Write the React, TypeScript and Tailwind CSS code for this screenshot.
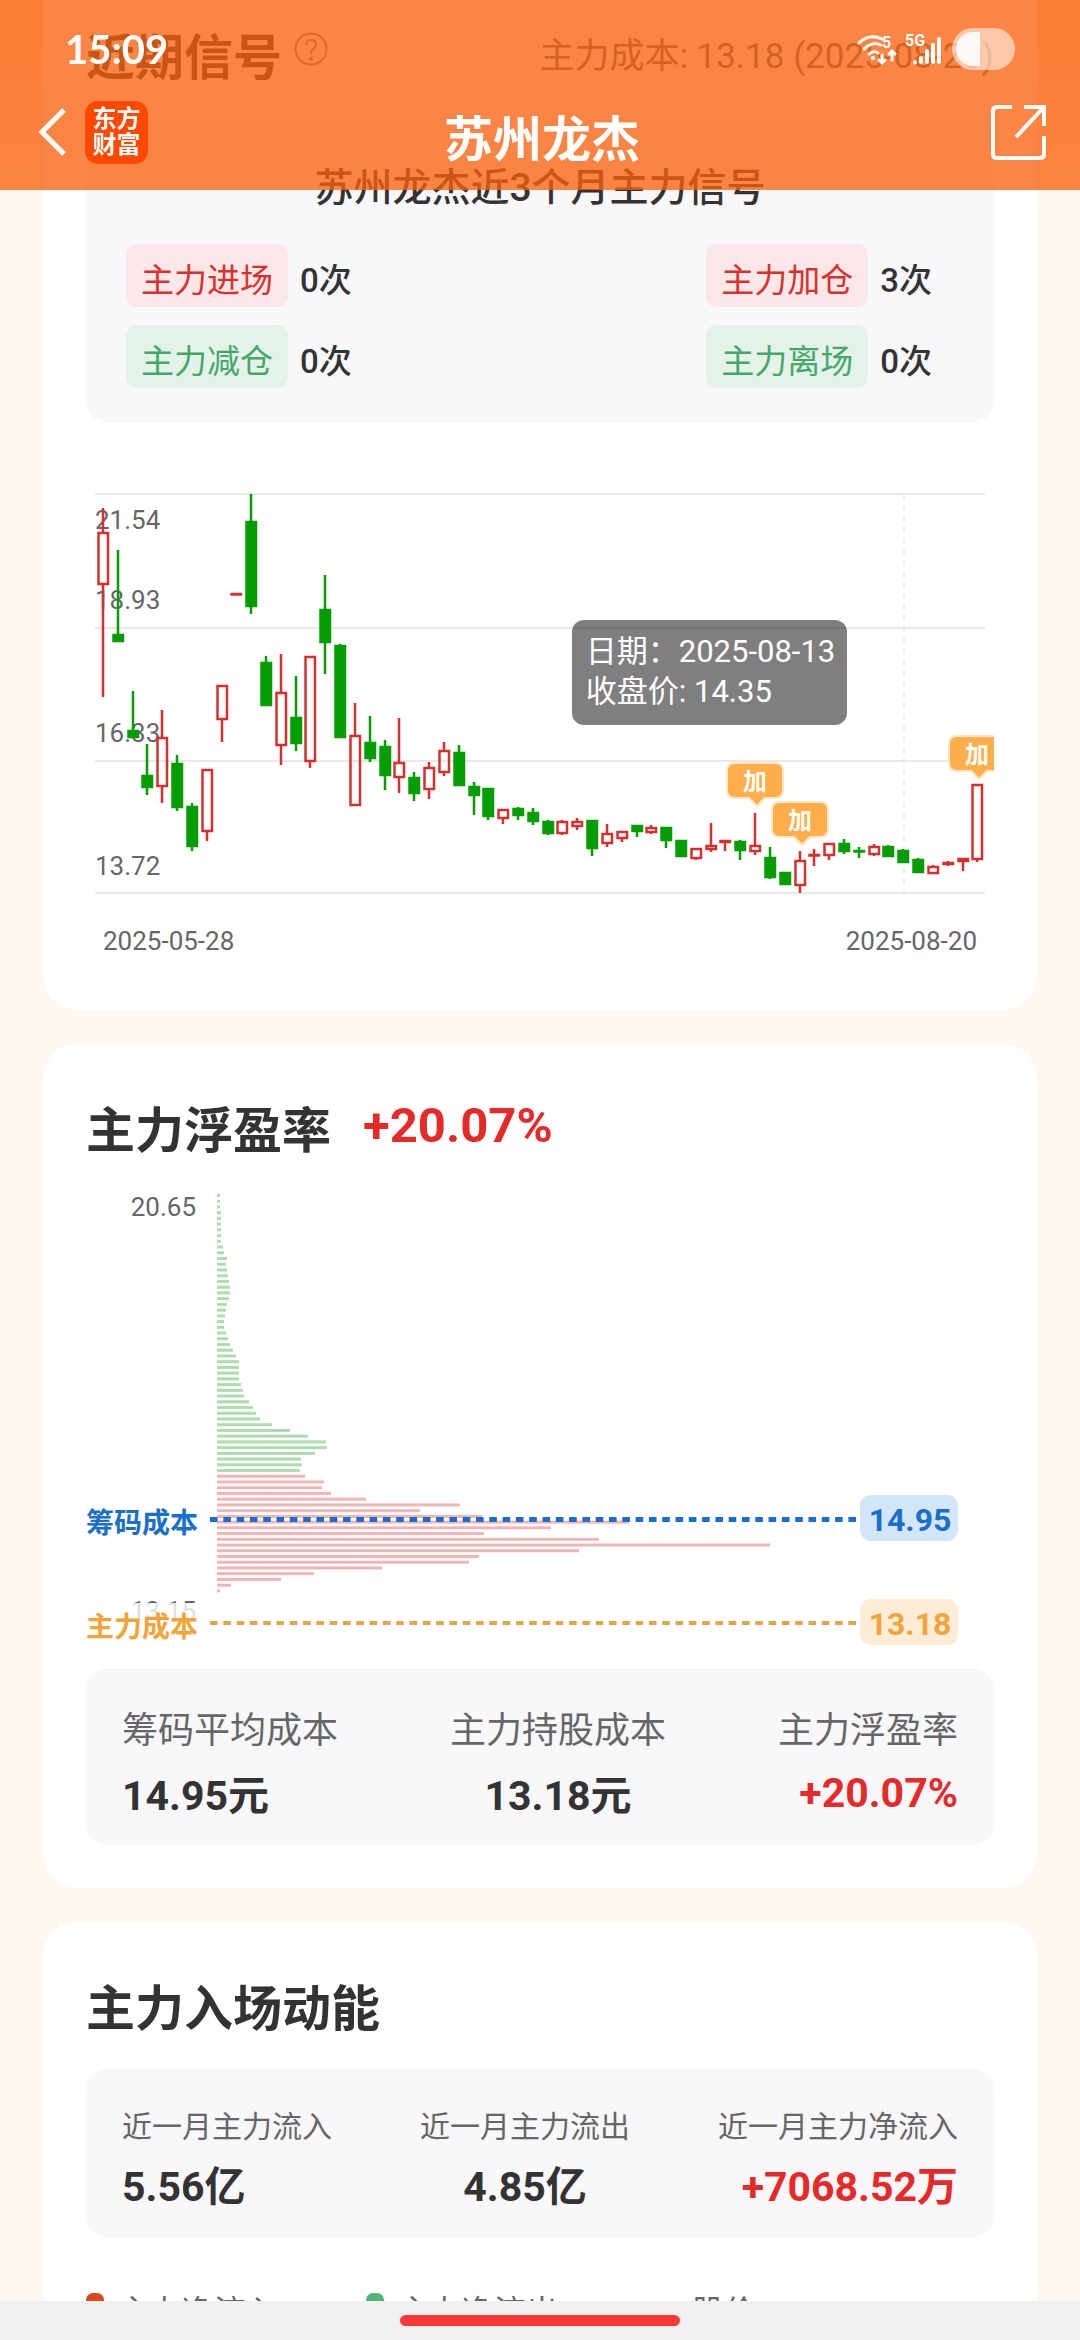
import type { ReactNode } from "react";

type Candle = { up: boolean; high: number; top: number; bottom: number; low: number };

const CANDLE_START = 17;
const CANDLE_STEP = 14.82;

// u = close above open, d = close below open: [kind, high, top, bottom, low]
const RAW_CANDLES: [string, number, number, number, number][] = [
    ["u", 28, 52, 105, 217], ["d", 70, 154, 162, 162], ["d", 211, 250, 258, 258], ["d", 264, 295, 308, 315],
    ["u", 230, 257, 307, 323], ["d", 275, 283, 328, 331], ["d", 323, 326, 367, 371], ["u", 289, 289, 352, 361],
    ["u", 205, 205, 240, 262], ["u", 113, 113, 115, 115], ["d", 14, 41, 127, 134], ["d", 176, 182, 226, 226],
    ["u", 174, 212, 266, 285], ["d", 196, 237, 264, 271], ["u", 176, 176, 282, 288], ["d", 95, 129, 163, 194],
    ["d", 164, 165, 258, 258], ["u", 223, 255, 326, 326], ["d", 236, 262, 279, 282], ["d", 260, 266, 296, 310],
    ["u", 238, 282, 298, 313], ["d", 292, 297, 314, 321], ["u", 282, 287, 310, 319], ["u", 262, 270, 293, 296],
    ["d", 265, 272, 306, 306], ["d", 302, 306, 316, 335], ["d", 308, 308, 337, 340], ["u", 329, 329, 339, 344],
    ["d", 327, 328, 336, 340], ["d", 328, 332, 342, 345], ["d", 340, 341, 354, 355], ["u", 340, 341, 354, 355],
    ["u", 338, 341, 347, 350], ["d", 340, 340, 369, 376], ["u", 344, 353, 364, 367], ["u", 351, 351, 359, 362],
    ["d", 345, 345, 352, 357], ["u", 345, 347, 353, 354], ["d", 347, 347, 361, 368], ["d", 360, 360, 377, 377],
    ["u", 368, 368, 379, 380], ["u", 343, 365, 370, 372], ["u", 360, 360, 363, 371], ["d", 360, 361, 371, 380],
    ["u", 333, 365, 372, 375], ["d", 367, 377, 398, 399], ["d", 392, 392, 405, 405], ["u", 371, 380, 406, 413],
    ["u", 369, 374, 376, 386], ["u", 363, 363, 376, 380], ["d", 359, 363, 372, 374], ["d", 367, 370, 372, 378],
    ["u", 364, 366, 375, 376], ["d", 365, 366, 377, 377], ["d", 369, 370, 383, 383], ["d", 378, 379, 393, 393],
    ["u", 385, 386, 394, 394], ["u", 381, 382, 385, 386], ["u", 378, 378, 382, 391], ["u", 304, 304, 380, 382],
];

const CANDLES: Candle[] = RAW_CANDLES.map(([kind, high, top, bottom, low]) => ({
    up: kind === "u", high, top, bottom, low,
}));

const PROFIT_BARS = [
    3, 3, 3, 4, 4, 4, 4, 4, 4, 6, 7, 10, 9, 10, 11, 12, 13, 13, 12, 10, 9, 8, 7, 7, 9, 11, 13, 16, 19, 22,
    22, 22, 22, 24, 26, 27, 32, 36, 39, 43, 55, 73, 91, 109, 110, 98, 84, 85, 83,
];

const LOSS_BARS = [
    88, 107, 105, 114, 149, 243, 203, 265, 412, 334, 267, 382, 553, 362, 262, 252, 165, 97, 64, 14, 3,
];

const SIGNALS = [
    { name: "主力进场", count: 0, buy: true },
    { name: "主力加仓", count: 3, buy: true },
    { name: "主力减仓", count: 0, buy: false },
    { name: "主力离场", count: 0, buy: false },
];

function Card({ children, className = "" }: { children: ReactNode; className?: string }) {
    return <section className={`bg-white px-[43px] ${className}`}>{children}</section>;
}

function StatusIcons() {
    return (
        <svg width="164" height="50" viewBox="0 0 164 50" fill="none" stroke="white" strokeLinecap="round">
            {/* wifi */}
            <path d="M3 19 Q13 9 26 15" strokeWidth="3" />
            <path d="M8 25 Q16 17 25 21" strokeWidth="3" />
            <path d="M13 30 Q18 26 22 29" strokeWidth="3" />
            <circle cx="17" cy="34" r="2" fill="white" stroke="none" />
            <text x="26" y="24" fontSize="16" fontWeight="700" fill="white" stroke="none">5</text>
            <path d="M26 31 V38 M23 36 L26 39 L29 36" strokeWidth="3" />
            <path d="M36 36 V28 M33 30 L36 27 L39 30" strokeWidth="3" />
            {/* mobile signal */}
            <text x="49" y="22" fontSize="16" fontWeight="700" fill="white" stroke="none">5G</text>
            <path d="M59 38 V38.5 M65 34 V38 M71 27 V38 M77 21 V38 M83 15 V38" strokeWidth="4" />
            {/* battery */}
            <rect x="96" y="4" width="63" height="42" rx="21" fill="white" fillOpacity="0.55" stroke="none" />
            <path d="M124 8 V42 H117 A17 17 0 0 1 117 8 Z" fill="white" fillOpacity="0.9" stroke="none" />
        </svg>
    );
}

function Header() {
    return (
        <header className="fixed inset-x-0 top-0 z-20 flex h-[190px] flex-col bg-[#fa600c]/77 text-white">
            <div className="flex h-[98px] items-center justify-between pl-[65px] pr-[60px]">
                <time className="font-['Lato'] text-[40px] font-bold">15:09</time>
                <StatusIcons />
            </div>
            <div className="grid h-[68px] grid-cols-[1fr_auto_1fr] items-center pl-9 pr-8">
                <div className="flex items-center gap-4">
                    <button type="button" aria-label="返回">
                        <svg width="33" height="50" viewBox="0 0 33 50" fill="none" stroke="white" strokeWidth="5">
                            <path d="M28 3 L6 25 L28 47" />
                        </svg>
                    </button>
                    <a href="#" className="grid h-[63px] w-[63px] place-content-center rounded-[13px] bg-[#ff4800] text-center text-2xl leading-[26px] font-bold">
                        东方<br />财富
                    </a>
                </div>
                <h1 className="pt-4 text-[49px] leading-none font-bold">苏州龙杰</h1>
                <button type="button" aria-label="分享" className="justify-self-end">
                    <svg width="60" height="60" viewBox="0 0 60 60" fill="none" stroke="white" strokeWidth="4">
                        <path d="M24 5 H9 Q5 5 5 9 V52 Q5 56 9 56 H52 Q56 56 56 52 V34" />
                        <path d="M36 5 H56 V24" />
                        <path d="M28 35 L56 5" />
                    </svg>
                </button>
            </div>
        </header>
    );
}

function AddTag({ x, y }: { x: number; y: number }) {
    return (
        <g>
            <path
                d={`M${x - 20} ${y} H${x + 20} Q${x + 28} ${y} ${x + 28} ${y + 8} V${y + 27} Q${x + 28} ${y + 35} ${x + 20} ${y + 35} H${x + 10} L${x + 2} ${y + 43} L${x - 6} ${y + 35} H${x - 20} Q${x - 28} ${y + 35} ${x - 28} ${y + 27} V${y + 8} Q${x - 28} ${y} ${x - 20} ${y} Z`}
                fill="#ffae4b"
                stroke="#ffe6c4"
                strokeWidth="2"
            />
            <text x={x} y={y + 27} fontSize="24" fontWeight="700" fill="white" textAnchor="middle">加</text>
        </g>
    );
}

function CandleChart() {
    return (
        <div className="relative">
            <svg viewBox="0 0 908 480" className="w-full">
                {[14, 148, 281, 413].map((y) => (
                    <rect key={y} x="9" y={y - 1} width="890" height="2" fill="#e8e8e8" />
                ))}
                <path d="M818 14 V413" stroke="#dddddd" strokeWidth="1" strokeDasharray="6 5" />
                <g fontSize="26" fill="#666666">
                    <text x="9" y="49">21.54</text>
                    <text x="9" y="129">18.93</text>
                    <text x="9" y="262">16.33</text>
                    <text x="9" y="395">13.72</text>
                    <text x="17" y="470">2025-05-28</text>
                    <text x="891" y="470" textAnchor="end">2025-08-20</text>
                </g>
                {CANDLES.map((c, i) => {
                    const x = Math.round(CANDLE_START + i * CANDLE_STEP);
                    const color = c.up ? "#d43030" : "#049e04";
                    return (
                        <g key={i} stroke={color} strokeWidth="2.5">
                            <path d={`M${x} ${c.high} V${c.top} M${x} ${c.bottom} V${c.low}`} />
                            <rect
                                x={x - 4.5}
                                y={c.top + 1}
                                width="9.5"
                                height={Math.max(c.bottom - c.top - 2, 0.5)}
                                fill={c.up ? "none" : color}
                            />
                        </g>
                    );
                })}
                <AddTag x={669} y={283} />
                <AddTag x={714} y={322} />
                <AddTag x={891} y={256} />
            </svg>
            <div className="absolute top-[140px] left-[53.5%] rounded-xl bg-black/50 pt-3 pr-3 pb-[13px] pl-3.5 text-[31px] leading-10 text-white">
                <p>日期：2025-08-13</p>
                <p>收盘价: 14.35</p>
            </div>
        </div>
    );
}

function CostChart() {
    return (
        <svg viewBox="0 0 908 478" className="w-full">
            <text x="110" y="36" textAnchor="end" fontSize="26" fill="#666666">20.65</text>
            {[...PROFIT_BARS, ...LOSS_BARS].map((w, i) => (
                <rect
                    key={i}
                    x="131"
                    y={14 + i * 5.73}
                    width={w}
                    height="3"
                    fill={i < PROFIT_BARS.length ? "#aedcae" : "#f2b5b5"}
                />
            ))}
            <text x="110" y="440" textAnchor="end" fontSize="26" fill="#666666">13.15</text>
            <rect x="0" y="423" width="112" height="44" fill="white" fillOpacity="0.8" />
            <path d="M124 339.5 H771" stroke="#1a6fca" strokeWidth="5" strokeDasharray="7.6 5.7" />
            <path d="M124 443 H771" stroke="#e0a748" strokeWidth="4" strokeDasharray="7.6 5.7" />
            <rect x="774" y="315" width="98" height="46" rx="11" fill="#d2e5f9" />
            <rect x="774" y="419" width="98" height="46" rx="11" fill="#fdecd6" />
            <g fontWeight="700" fontSize="28">
                <text x="0" y="353" fill="#1a6fca">筹码成本</text>
                <text x="0" y="457" fill="#f2a43a">主力成本</text>
            </g>
            <g fontWeight="700" fontSize="32" textAnchor="middle">
                <text x="824" y="351" fill="#1a6fca">14.95</text>
                <text x="824" y="455" fill="#f2a43a">13.18</text>
            </g>
        </svg>
    );
}

type StatProps = { label: string; value: string; small?: boolean; red?: boolean; align: string };

function Stat({ label, value, small, red, align }: StatProps) {
    return (
        <div className={align}>
            <dt className={small ? "text-[30px] leading-[50px] text-[#666]" : "text-4xl leading-[60px] text-[#666]"}>{label}</dt>
            <dd
                className={`text-[41px] font-bold ${red ? "text-[#e52a2a]" : "text-[#333]"} ${
                    value.endsWith("%") ? "leading-[64px]" : "leading-[70px]"
                }`}
            >
                {value}
            </dd>
        </div>
    );
}

function App() {
    return (
        <div className="min-h-screen bg-[#fff8f1] font-['Roboto','Noto_Sans_CJK_SC',sans-serif] text-[#333]">
            <Header />
            <main className="flex flex-col gap-[34px] bg-[linear-gradient(#ffd9c0,#fff8f1_190px)] px-[43px]">
                <Card className="rounded-b-[34px] pb-[50px]">
                    <div className="flex h-[118px] items-center justify-between">
                        <div className="flex items-center gap-3">
                            <h2 className="text-[49px] leading-[60px] font-bold">近期信号</h2>
                            <svg width="34" height="34" viewBox="0 0 34 34" fill="none" stroke="#888888" strokeWidth="2" className="mb-5">
                                <circle cx="17" cy="17" r="15.5" />
                                <path d="M12 13 Q12 8 17 8 Q22 8 22 12.5 Q22 15 19 17 Q17 18.5 17 22" />
                                <circle cx="17" cy="26.5" r="1" fill="#888888" />
                            </svg>
                        </div>
                        <p className="pb-1 text-[35px] text-[#666]">主力成本: 13.18 (2025-08-20)</p>
                    </div>
                    <div className="rounded-[22px] bg-[#f8f8fa] pt-10 pb-[35px]">
                        <h3 className="text-center text-[39px] leading-[60px] font-medium">苏州龙杰近3个月主力信号</h3>
                        <ul className="mt-[26px] grid grid-cols-[1fr_auto] gap-y-[18px] pr-[62px] pl-10">
                            {SIGNALS.map((s) => (
                                <li key={s.name} className="flex items-center gap-3">
                                    <span
                                        className={`rounded-[10px] px-[15px] pt-2.5 text-[33px] leading-[53px] ${
                                            s.buy ? "bg-[#fae7e7] text-[#d9302f]" : "bg-[#e4f2ea] text-[#45a868]"
                                        }`}
                                    >
                                        {s.name}
                                    </span>
                                    <span className="pt-2.5 text-[33px] leading-[53px] font-medium">{s.count}次</span>
                                </li>
                            ))}
                        </ul>
                    </div>
                    <div className="mt-[57px]">
                        <CandleChart />
                    </div>
                </Card>

                <Card className="rounded-[34px] pt-[50px] pb-[43px]">
                    <div className="flex items-start gap-8">
                        <h2 className="text-[49px] leading-[76px] font-bold">主力浮盈率</h2>
                        <p className="text-[49px] leading-[64px] font-bold text-[#e52a2a]">+20.07%</p>
                    </div>
                    <div className="mt-2.5">
                        <CostChart />
                    </div>
                    <dl className="mt-2.5 flex justify-between rounded-[22px] bg-[#f8f8fa] px-9 pt-[33px] pb-3.5">
                        <Stat label="筹码平均成本" value="14.95元" align="text-left" />
                        <Stat label="主力持股成本" value="13.18元" align="text-center" />
                        <Stat label="主力浮盈率" value="+20.07%" align="text-right" red />
                    </dl>
                </Card>

                <Card className="rounded-t-[34px] pt-[50px]">
                    <h2 className="text-[49px] leading-[76px] font-bold">主力入场动能</h2>
                    <dl className="mt-[21px] flex justify-between rounded-[22px] bg-[#f8f8fa] px-9 pt-[33px] pb-4">
                        <Stat label="近一月主力流入" value="5.56亿" align="text-left" small />
                        <Stat label="近一月主力流出" value="4.85亿" align="text-center" small />
                        <Stat label="近一月主力净流入" value="+7068.52万" align="text-right" small red />
                    </dl>
                    <ul className="mt-[54px] flex gap-[88px] text-[32px] leading-10 text-[#666]">
                        <li className="flex items-center gap-3.5">
                            <span className="h-[38px] w-[18px] rounded-[7px] bg-[#d94a1c]" />
                            主力净流入
                        </li>
                        <li className="flex items-center gap-3.5">
                            <span className="h-[38px] w-[18px] rounded-[7px] bg-[#55b577]" />
                            主力净流出
                        </li>
                        <li className="flex items-center gap-3.5">
                            <span className="h-1 w-8 bg-[#1a6fca]" />
                            股价
                        </li>
                    </ul>
                </Card>
            </main>
            <footer className="fixed inset-x-0 bottom-0 z-20 flex h-[39px] justify-center bg-[#f0f0f2] pt-3.5">
                <div className="h-[11px] w-[280px] rounded-full bg-[#ff3838]" />
            </footer>
        </div>
    );
}

export default App;
